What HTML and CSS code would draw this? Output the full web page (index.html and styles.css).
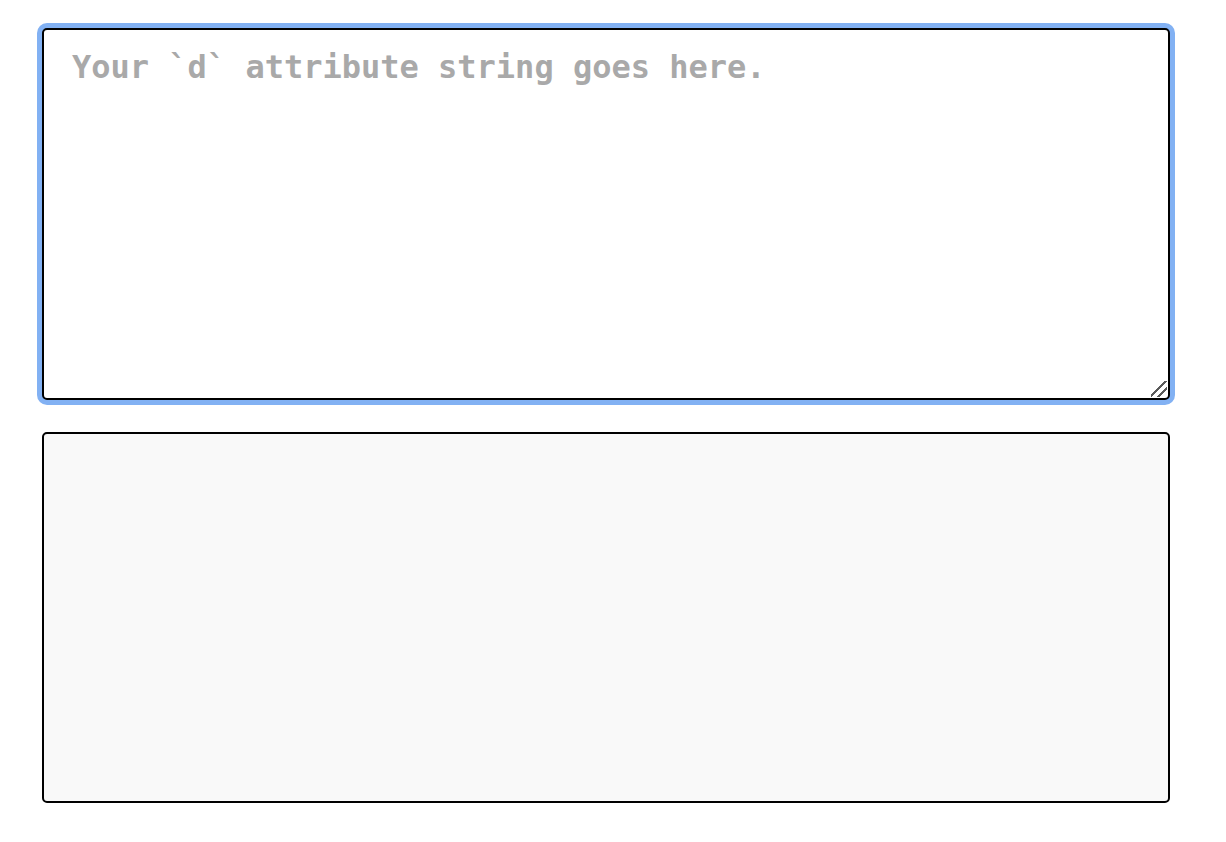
FILE: index.html
```html
<!DOCTYPE html>
<html>
<head>
<meta charset="utf-8">
<link rel="stylesheet" href="styles.css">
</head>
<body>
<main class="page">
  <div class="editor-wrap">
    <textarea class="editor" placeholder="Your `d` attribute string goes here." autofocus></textarea>
  </div>
  <div class="preview"></div>
</main>
</body>
</html>
```
FILE: styles.css
```css
html, body {
  margin: 0;
  padding: 0;
  background: #ffffff;
}
.page {
  display: flex;
  flex-direction: column;
  gap: 32px;
  padding: 28px 56px 0 42px;
}
.editor-wrap {
  position: relative;
  display: flex;
}
.editor-wrap::after {
  content: "";
  position: absolute;
  right: 3px;
  bottom: 3px;
  width: 16px;
  height: 16px;
  pointer-events: none;
  background:
    linear-gradient(135deg, transparent 0 43%, #5a5a5a 43% 53%, transparent 53% 66%, #5a5a5a 66% 76%, transparent 76%);
}
.editor {
  box-sizing: border-box;
  width: 100%;
  height: 372px;
  margin: 0;
  padding: 18px 28px;
  border: 2px solid #000;
  border-radius: 5px;
  font-family: "DejaVu Sans Mono", monospace;
  font-weight: bold;
  font-size: 32px;
  color: #333;
  background: #fff;
  outline: none;
  resize: none;
  box-shadow: 0 0 0 5px #82b1f3;
}
.editor::placeholder {
  color: #a9a9a9;
}
.preview {
  box-sizing: border-box;
  width: 100%;
  height: 371px;
  border: 2px solid #000;
  border-radius: 5px;
  background: #f9f9f9;
}
```
